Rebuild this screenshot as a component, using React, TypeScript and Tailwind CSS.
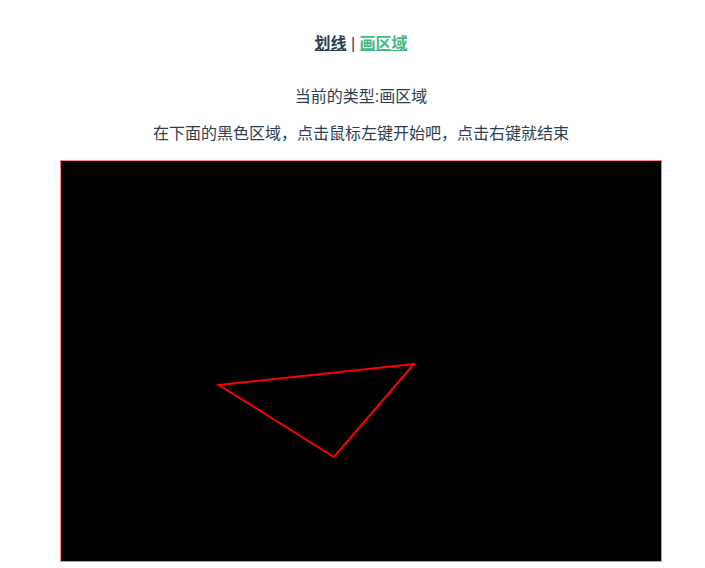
import React from 'react';

const App: React.FC = () => {
  // canvas-like drawing area, points relative to the 600x400 box
  const points = '158,224 353,203 273,296';

  return (
    <div
      className="pl-[17px] text-center text-[16px] text-[#2c3e50] bg-white min-h-[568px]"
      style={{ fontFamily: '"Liberation Sans", "Noto Sans CJK SC", sans-serif' }}
    >
      <div className="pt-[33px] pb-4 leading-[21px]">
        <a href="#" className="font-bold underline text-[#2c3e50]">划线</a>
        <span> | </span>
        <a href="#" className="font-bold underline text-[#42b983]">画区域</a>
      </div>
      <p className="my-4 leading-[21px]">当前的类型:画区域</p>
      <p className="my-4 leading-[21px]">在下面的黑色区域，点击鼠标左键开始吧，点击右键就结束</p>
      <div className="mx-auto w-[602px] h-[402px] border border-[#ff8080] bg-black">
        <svg width="600" height="400" className="block">
          <polygon points={points} fill="none" stroke="#ff0000" strokeWidth="2" />
        </svg>
      </div>
    </div>
  );
};

export default App;
